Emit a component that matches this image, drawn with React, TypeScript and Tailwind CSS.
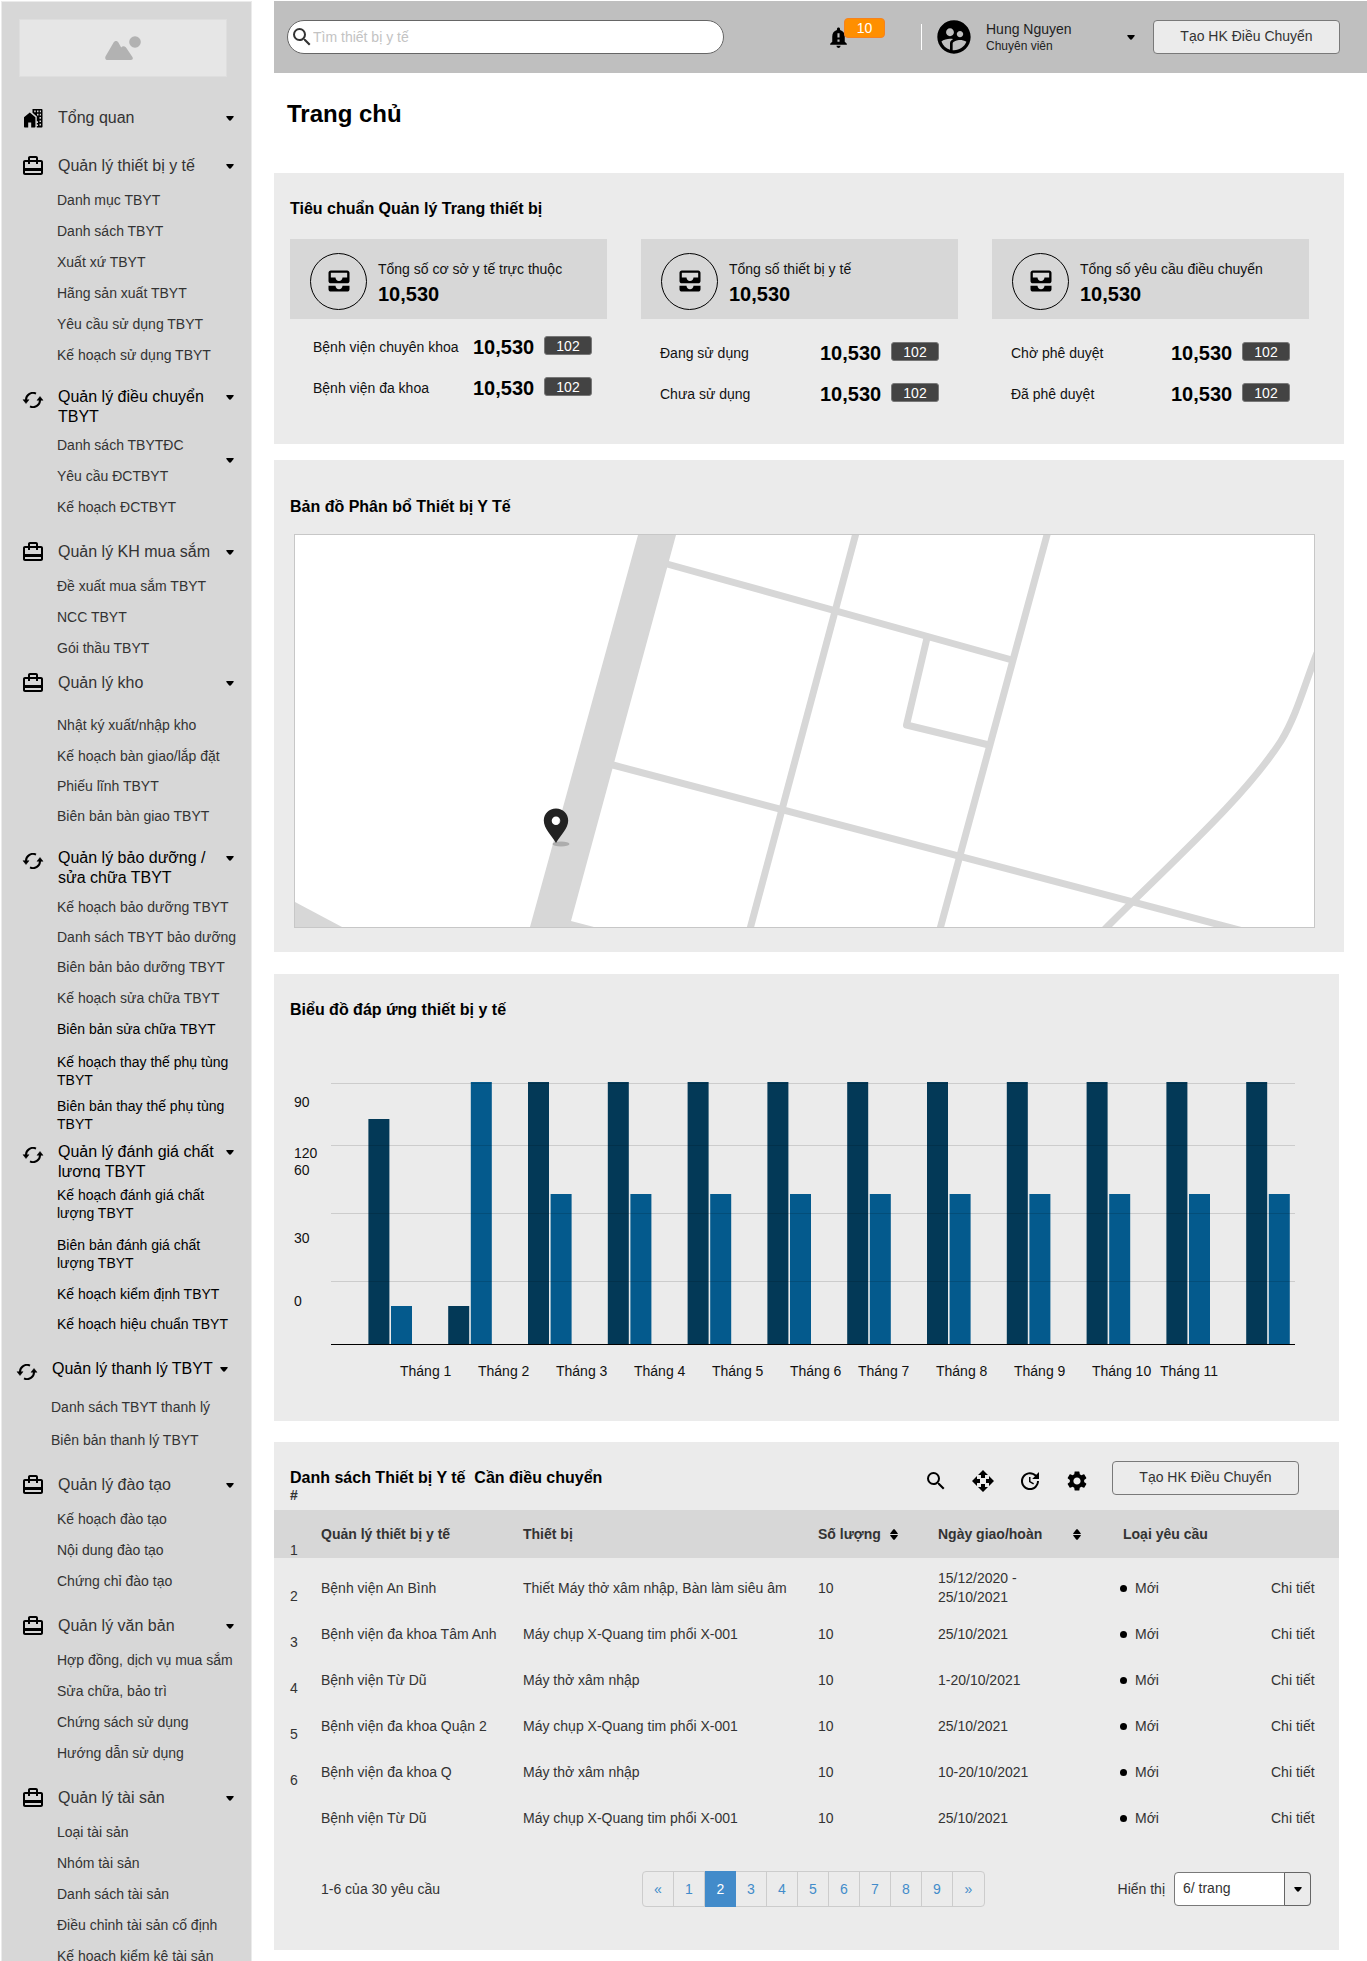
import {
  MdAllInbox,
  MdCardTravel,
  MdNotificationImportant,
  MdOpenWith,
  MdSearch,
  MdSettings,
  MdSupervisedUserCircle,
  MdUpdate,
} from "react-icons/md";

type IconKind = "home" | "case" | "cycle";

type MenuItem = { label: string; gap?: string; dark?: boolean };

type MenuGroup = {
  label: string;
  icon: IconKind;
  space: string;
  listSpace?: string;
  indent?: string;
  clip?: boolean;
  sideCaret?: boolean;
  items: MenuItem[];
};

const plain = (...labels: string[]): MenuItem[] => labels.map((label) => ({ label }));

const MENU: MenuGroup[] = [
  { label: "Tổng quan", icon: "home", space: "mt-[31px]", items: [] },
  {
    label: "Quản lý thiết bị y tế",
    icon: "case",
    space: "mt-7",
    items: plain(
      "Danh mục TBYT",
      "Danh sách TBYT",
      "Xuất xứ TBYT",
      "Hãng sản xuất TBYT",
      "Yêu cầu sử dụng TBYT",
      "Kế hoạch sử dụng TBYT",
    ),
  },
  {
    label: "Quản lý điều chuyển TBYT",
    icon: "cycle",
    space: "mt-[23px]",
    listSpace: "mt-[9px]",
    sideCaret: true,
    items: plain("Danh sách TBYTĐC", "Yêu cầu ĐCTBYT", "Kế hoạch ĐCTBYT"),
  },
  {
    label: "Quản lý KH mua sắm",
    icon: "case",
    space: "mt-[26px]",
    items: plain("Đề xuất mua sắm TBYT", "NCC TBYT", "Gói thầu TBYT"),
  },
  {
    label: "Quản lý kho",
    icon: "case",
    space: "mt-4",
    listSpace: "mt-[23px]",
    items: [
      { label: "Nhật ký xuất/nhập kho" },
      { label: "Kế hoạch bàn giao/lắp đặt" },
      { label: "Phiếu lĩnh TBYT", gap: "mt-3" },
      { label: "Biên bản bàn giao TBYT", gap: "mt-3" },
    ],
  },
  {
    label: "Quản lý bảo dưỡng / sửa chữa TBYT",
    icon: "cycle",
    space: "mt-[23px]",
    listSpace: "mt-[10px]",
    items: [
      { label: "Kế hoạch bảo dưỡng TBYT" },
      { label: "Danh sách TBYT bảo dưỡng", gap: "mt-3" },
      { label: "Biên bản bảo dưỡng TBYT", gap: "mt-3" },
      { label: "Kế hoạch sửa chữa TBYT" },
      { label: "Biên bản sửa chữa TBYT", dark: true },
      { label: "Kế hoạch thay thế phụ tùng TBYT", gap: "mt-[15px]", dark: true },
      { label: "Biên bản thay thế phụ tùng TBYT", gap: "mt-2", dark: true },
    ],
  },
  {
    label: "Quản lý đánh giá chất lượng TBYT",
    icon: "cycle",
    space: "mt-[9px]",
    listSpace: "mt-2",
    clip: true,
    items: [
      { label: "Kế hoạch đánh giá chất lượng TBYT", dark: true },
      { label: "Biên bản đánh giá chất lượng TBYT", dark: true, gap: "mt-[14px]" },
      { label: "Kế hoạch kiểm định TBYT", dark: true },
      { label: "Kế hoạch hiệu chuẩn TBYT", gap: "mt-3", dark: true },
    ],
  },
  {
    label: "Quản lý thanh lý TBYT",
    icon: "cycle",
    space: "mt-[26px]",
    listSpace: "mt-[19px]",
    indent: "pl-[13px]",
    items: [{ label: "Danh sách TBYT thanh lý" }, { label: "Biên bản thanh lý TBYT", gap: "mt-[15px]" }],
  },
  {
    label: "Quản lý đào tạo",
    icon: "case",
    space: "mt-[26px]",
    items: plain("Kế hoạch đào tạo", "Nội dung đào tạo", "Chứng chỉ đào tạo"),
  },
  {
    label: "Quản lý văn bản",
    icon: "case",
    space: "mt-[26px]",
    items: plain("Hợp đồng, dịch vụ mua sắm", "Sửa chữa, bảo trì", "Chứng sách sử dụng", "Hướng dẫn sử dụng"),
  },
  {
    label: "Quản lý tài sản",
    icon: "case",
    space: "mt-[26px]",
    items: plain(
      "Loại tài sản",
      "Nhóm tài sản",
      "Danh sách tài sản",
      "Điều chỉnh tài sản cố định",
      "Kế hoạch kiểm kê tài sản",
    ),
  },
];

function Caret() {
  return (
    <svg className="h-[5px] w-2 shrink-0" viewBox="0 0 8 5" aria-hidden="true">
      <path d="M.9 0h6.200c.6 0 .8.7.5 1.100L5.200 4.100c-.6.800-1.800.8-2.400 0L.4 1.100C.1.700.3 0 .9 0z" />
    </svg>
  );
}

function HomeIcon() {
  return (
    <svg className="mx-0.5 mt-px h-[19px] w-5 shrink-0" viewBox="0 0 20 19" aria-hidden="true">
      <path d="M6.800 3.600 1 8.200v9.500c0 .5.300.8.800.8h3.400v-5h3v5h3.400c.5 0 .8-.3.800-.8V8.200z" />
      <path
        fillRule="evenodd"
        d="M9.500 0h9c.6 0 1 .4 1 1v16.500c0 .6-.4 1-1 1h-4.700v-1.500H15v-1.600h-1.200v-1.500H15v-1.600h-1.200V7.400L9.500 3.800zM11.200 1.500v1.700h1.500V1.500zM14 1.500v1.700h1.500V1.500zM16.800 1.500v1.700H18V1.500zM14 4.800v1.700h1.500V4.800zM16.800 4.800v1.700H18V4.800zM16.500 8.100v1.700H18V8.100zM16.500 11.400v1.700H18v-1.700zM16.500 14.700v1.700H18v-1.700z"
      />
    </svg>
  );
}

function CycleIcon() {
  return (
    <svg className="mx-px mt-[5px] -mb-1 h-4 w-[22px] shrink-0" viewBox="0 0 22 16" aria-hidden="true">
      <g fill="none" stroke="#000" strokeWidth="2">
        <path d="M14 1.600A7 7 0 0 0 4 8.200" />
        <path d="M8 14.400A7 7 0 0 0 18 7.800" />
      </g>
      <path d="M1 7.700h6L4 11.500zM15 8.300h6L18 4.500z" stroke="#000" strokeWidth=".5" strokeLinejoin="round" />
    </svg>
  );
}

function GroupIcon({ kind }: { kind: IconKind }) {
  if (kind === "home") return <HomeIcon />;
  if (kind === "case") return <MdCardTravel className="-my-0.5 size-6 shrink-0" aria-hidden="true" />;
  return <CycleIcon />;
}

function SidebarGroup({ group }: { group: MenuGroup }) {
  const tone = group.icon === "cycle" ? "text-black" : "text-[#333]";
  return (
    <section className={`${group.space} ${group.indent ?? "pl-[19px]"}`}>
      <button type="button" className="flex w-full items-start text-left">
        <GroupIcon kind={group.icon} />
        <span
          className={`ml-[13px] w-[168px] text-base leading-5 ${tone} ${group.clip ? "h-9 overflow-hidden" : ""}`}
        >
          {group.label}
        </span>
        <span className="flex h-5 items-center">
          <Caret />
        </span>
      </button>
      {group.items.length > 0 && (
        <div className={`flex pl-9 ${group.listSpace ?? "mt-[15px]"}`}>
          <ul className="w-[182px] text-sm leading-[18px]">
            {group.items.map((item, i) => (
              <li key={item.label} className={i === 0 ? "" : (item.gap ?? "mt-[13px]")}>
                <a href="#" className={item.dark ? "text-black" : "text-[#333]"}>
                  {item.label}
                </a>
              </li>
            ))}
          </ul>
          {group.sideCaret && (
            <button type="button" aria-label="Mở rộng" className="-ml-[13px] flex h-[49px] items-center">
              <Caret />
            </button>
          )}
        </div>
      )}
    </section>
  );
}

function Sidebar() {
  return (
    <nav
      aria-label="Danh mục"
      className="mt-px ml-px w-[251px] shrink-0 overflow-hidden border-x border-t border-[#ebebeb] bg-[#d7d7d7]"
    >
      <div className="mt-[17px] ml-[17px] flex h-[58px] w-[208px] items-center justify-center border border-[#dedede] bg-[#e6e6e6]">
        <svg className="h-6 w-9" viewBox="0 0 36 24" fill="#b2b2b2" aria-hidden="true">
          <circle cx="30" cy="6" r="5.800" />
          <path d="M.6 20.200 8.600 6.600c1.200-2 3.600-2 4.800 0l2.800 4.800c1.200-1.600 3.600-1.500 5 .4l6.200 9.200c1 1.600.2 3-1.400 3H2.600C.6 24-.4 22 .6 20.200z" />
        </svg>
      </div>
      {MENU.map((group) => (
        <SidebarGroup key={group.label} group={group} />
      ))}
    </nav>
  );
}

function TopBar() {
  return (
    <header className="flex h-[72px] items-center bg-[#bfbfbf] pr-[27px] pl-[13px]">
      <label className="flex h-[34px] w-[437px] items-center rounded-full border border-[#666] bg-white pl-0.5">
        <MdSearch className="size-6 shrink-0 text-[#333]" aria-hidden="true" />
        <input
          type="search"
          aria-label="Tìm thiết bị y tế"
          placeholder="Tìm thiết bị y tế"
          className="mr-4 -ml-px min-w-0 flex-1 bg-transparent text-sm outline-none placeholder:text-[#c3c3c3]"
        />
      </label>
      <div className="ml-auto flex items-center">
        <button type="button" aria-label="Thông báo" className="relative">
          <MdNotificationImportant className="size-[25px]" aria-hidden="true" />
          <span className="absolute -top-[7px] left-[18px] flex h-5 w-[41px] items-center justify-center rounded border border-[#f58220] bg-[#ff8f00] text-sm leading-4 text-white">
            10
          </span>
        </button>
        <div className="ml-[70px] h-[26px] w-px bg-white" />
        <MdSupervisedUserCircle className="ml-3 size-10" aria-hidden="true" />
        <div className="ml-3 w-[130px] text-[#222]">
          <p className="text-sm leading-[17px]">Hung Nguyen</p>
          <p className="text-xs leading-4">Chuyên viên</p>
        </div>
        <button type="button" aria-label="Tài khoản" className="ml-[11px]">
          <Caret />
        </button>
        <button
          type="button"
          className="ml-[18px] h-[34px] w-[187px] rounded border border-[#797979] bg-[#ebebeb] pb-0.5 text-sm text-[#333]"
        >
          Tạo HK Điều Chuyển
        </button>
      </div>
    </header>
  );
}

type Stat = { title: string; layout: string; rows: string[] };

const STATS: Stat[] = [
  {
    title: "Tổng số cơ sở y tế trực thuộc",
    layout: "mt-[17px] pl-[23px]",
    rows: ["Bệnh viện chuyên khoa", "Bệnh viện đa khoa"],
  },
  { title: "Tổng số thiết bị y tế", layout: "mt-[23px] pl-[19px]", rows: ["Đang sử dụng", "Chưa sử dụng"] },
  {
    title: "Tổng số yêu cầu điều chuyển",
    layout: "mt-[23px] pl-[19px]",
    rows: ["Chờ phê duyệt", "Đã phê duyệt"],
  },
];

function StatsPanel() {
  return (
    <section className="mt-[45px] mr-[23px] bg-[#ebebeb] pt-[26px] pr-[35px] pb-[39px] pl-4">
      <h2 className="text-base leading-5 font-bold">Tiêu chuẩn Quản lý Trang thiết bị</h2>
      <div className="mt-5 grid grid-cols-3 gap-x-[34px]">
        {STATS.map((stat) => (
          <article key={stat.title}>
            <div className="flex h-20 items-center bg-[#d7d7d7] pt-1 pl-5">
              <div className="flex size-[57px] shrink-0 items-center justify-center rounded-full border border-black">
                <MdAllInbox className="size-7" aria-hidden="true" />
              </div>
              <div className="mt-[3px] ml-[11px]">
                <p className="text-sm leading-5 text-[#111]">{stat.title}</p>
                <p className="mt-[3px] text-xl leading-6 font-bold">10,530</p>
              </div>
            </div>
            <ul className={`flex flex-col gap-[19px] ${stat.layout}`}>
              {stat.rows.map((row) => (
                <li key={row} className="flex h-[22px] items-center">
                  <span className="w-40 text-sm text-[#111]">{row}</span>
                  <span className="w-[71px] text-xl leading-5 font-bold">10,530</span>
                  <span className="flex h-[19px] w-12 items-center justify-center self-start rounded-[3px] border border-[#777] bg-[#434343] text-sm leading-4 text-white">
                    102
                  </span>
                </li>
              ))}
            </ul>
          </article>
        ))}
      </div>
    </section>
  );
}

function MapPanel() {
  return (
    <section className="mt-4 mr-[23px] bg-[#ebebeb] pt-[37px] pb-6">
      <h2 className="pl-4 text-base leading-5 font-bold">Bản đồ Phân bổ Thiết bị Y Tế</h2>
      <div className="mt-[17px] mr-[29px] ml-5 border border-[#c7c7c7] bg-white">
        <svg className="block w-full" viewBox="0 0 1019 392" role="img" aria-label="Bản đồ">
          <g fill="#d7d7d7">
            <path d="M343 0h38L276 386l23 6H235z" />
            <path d="M0 367l47 25H0z" />
          </g>
          <g fill="none" stroke="#d7d7d7" strokeWidth="7">
            <path d="M372 29 717 125" />
            <path d="M561-2 455 394" />
            <path d="M752.500-2 645 394" />
            <path strokeLinejoin="round" d="M632 103 611.500 190 694 210" />
            <path d="M316 229.500 948 396" />
            <path d="M1022 118C1010 148 1002 180 986 206 950 262 880 324 808 396" />
          </g>
          <ellipse cx="266" cy="309" rx="8.500" ry="2.500" fill="#adadad" />
          <path
            fill="#222"
            fillRule="evenodd"
            d="M261 273.500c-7 0-12.200 5.400-12.200 12 0 8.300 8 15 12.200 22.500 4.200-7.500 12.200-14.200 12.200-22.500 0-6.600-5.200-12-12.200-12zm0 8a4.300 4.300 0 1 1 0 8.600 4.300 4.300 0 0 1 0-8.600z"
          />
        </svg>
      </div>
    </section>
  );
}

const BASELINE = 274;
const BAR_TOPS: [number, number][] = [
  [49, 236],
  [236, 12],
  ...Array.from({ length: 10 }, (): [number, number] => [12, 124]),
];
const GRID_LINES = [13, 75, 143, 211];
const SCALE_LABELS: [string, number][] = [
  ["90", 37],
  ["120", 88],
  ["60", 105],
  ["30", 173],
  ["0", 236],
];
const MONTH_X = [110, 188, 266, 344, 422, 500, 568, 646, 724, 802, 870];

function ChartPanel() {
  return (
    <section className="mt-[22px] mr-7 bg-[#ebebeb] pt-[26px] pr-[39px] pb-9 pl-4">
      <h2 className="text-base leading-5 font-bold">Biểu đồ đáp ứng thiết bị y tế</h2>
      <svg
        className="mt-[50px] block w-full text-sm"
        viewBox="0 0 1010 315"
        role="img"
        aria-label="Biểu đồ đáp ứng thiết bị y tế"
      >
        {BAR_TOPS.map(([dark, light], i) => {
          const x = 78.4 + i * 79.8;
          return (
            <g key={i}>
              <rect x={x} y={dark} width="21" height={BASELINE - dark} fill="#033957" />
              <rect x={x + 22.6} y={light} width="21" height={BASELINE - light} fill="#045a8d" />
            </g>
          );
        })}
        {GRID_LINES.map((y) => (
          <rect key={y} x="41" y={y} width="964" height="1" fill="#000" fillOpacity="0.13" />
        ))}
        <rect x="41" y={BASELINE} width="964" height="1" />
        <g fill="#111">
          {SCALE_LABELS.map(([label, y]) => (
            <text key={label} x="4" y={y}>
              {label}
            </text>
          ))}
          {MONTH_X.map((x, i) => (
            <text key={x} x={x} y="306">
              Tháng {i + 1}
            </text>
          ))}
        </g>
      </svg>
    </section>
  );
}

const ROWS = [
  ["Bệnh viện An Bình", "Thiết Máy thở xâm nhập, Bàn làm siêu âm", "15/12/2020 - 25/10/2021"],
  ["Bệnh viện đa khoa Tâm Anh", "Máy chụp X-Quang tim phổi X-001", "25/10/2021"],
  ["Bệnh viện Từ Dũ", "Máy thở xâm nhập", "1-20/10/2021"],
  ["Bệnh viện đa khoa Quận 2", "Máy chụp X-Quang tim phổi X-001", "25/10/2021"],
  ["Bệnh viện đa khoa Q", "Máy thở xâm nhập", "10-20/10/2021"],
  ["Bệnh viện Từ Dũ", "Máy chụp X-Quang tim phổi X-001", "25/10/2021"],
];

const PAGES = ["«", "1", "2", "3", "4", "5", "6", "7", "8", "9", "»"];

const TOOLS = [
  { label: "Tìm kiếm", Icon: MdSearch },
  { label: "Di chuyển", Icon: MdOpenWith },
  { label: "Cập nhật", Icon: MdUpdate },
  { label: "Cài đặt", Icon: MdSettings },
];

function SortIcon() {
  return (
    <svg className="h-[11px] w-2" viewBox="0 0 8 11" aria-hidden="true">
      <path d="M3.200.6c.4-.6 1.200-.6 1.600 0l2.900 3.600c.3.400.1.900-.4.900H.7c-.5 0-.7-.5-.4-.9zM.7 5.900h6.600c.5 0 .7.5.4.9l-2.900 3.600c-.4.6-1.200.6-1.600 0L.3 6.800c-.3-.4-.1-.9.4-.9z" />
    </svg>
  );
}

function TablePanel() {
  return (
    <section className="mt-[21px] mr-7 bg-[#ebebeb] pt-[19px] pb-[43px] text-sm text-[#333]">
      <div className="flex h-[49px] items-start pr-10 pl-4">
        <h2 className="mt-[7px] text-base leading-5 font-bold whitespace-pre text-black">
          {"Danh sách Thiết bị Y tế  Cần điều chuyển"}
        </h2>
        <div className="ml-auto flex items-start gap-[23px] text-black">
          {TOOLS.map(({ label, Icon }) => (
            <button key={label} type="button" aria-label={label} className="mt-2">
              <Icon className="size-6" aria-hidden="true" />
            </button>
          ))}
          <button
            type="button"
            className="h-[34px] w-[187px] rounded border border-[#797979] pb-0.5 text-[#333]"
          >
            Tạo HK Điều Chuyển
          </button>
        </div>
      </div>
      <table className="w-full table-fixed text-left">
        <colgroup>
          <col className="w-[47px]" />
          <col className="w-[202px]" />
          <col />
          <col className="w-[120px]" />
          <col className="w-[182px]" />
          <col className="w-[151px]" />
          <col className="w-[68px]" />
        </colgroup>
        <thead className="bg-[#d7d7d7]">
          <tr className="h-12">
            <th className="pl-4 align-top">
              <span className="-mt-6 block leading-[18px]">#</span>
            </th>
            <th>Quản lý thiết bị y tế</th>
            <th>Thiết bị</th>
            <th>
              <span className="flex items-center gap-[9px]">
                Số lượng <SortIcon />
              </span>
            </th>
            <th>
              <span className="flex items-center gap-[31px]">
                Ngày giao/hoàn <SortIcon />
              </span>
            </th>
            <th className="pl-[3px]">Loại yêu cầu</th>
            <th aria-label="Thao tác" />
          </tr>
        </thead>
        <tbody className="before:block before:h-[7px] before:content-['']">
          {ROWS.map(([place, device, date], i) => (
            <tr key={i} className="h-[46px]">
              <td className="pl-4 align-top">
                <span className="-mt-6 block leading-[18px]">{i + 1}</span>
              </td>
              <td>{place}</td>
              <td>{device}</td>
              <td>10</td>
              <td>
                <span className="block w-[100px] leading-[19px]">{date}</span>
              </td>
              <td>
                <span className="flex items-center gap-2">
                  <span className="size-[7px] rounded-full bg-black" />
                  Mới
                </span>
              </td>
              <td>
                <a href="#">Chi tiết</a>
              </td>
            </tr>
          ))}
        </tbody>
      </table>
      <div className="mt-[30px] flex items-center pr-7 pl-[47px]">
        <p className="w-[321px]">1-6 của 30 yêu cầu</p>
        <div className="flex h-9 rounded border border-[#ccc] text-[#428bca]">
          {PAGES.map((page) => (
            <button
              key={page}
              type="button"
              className={
                page === "2"
                  ? "-my-px w-[31px] bg-[#428bca] text-white"
                  : "w-[31px] border-r border-[#ccc] last:border-r-0"
              }
            >
              {page}
            </button>
          ))}
        </div>
        <label className="ml-auto flex items-center gap-[9px]">
          Hiển thị
          <span className="relative flex h-[34px] w-[137px]">
            <select className="w-full appearance-none rounded border border-[#797979] bg-white px-2 pb-0.5">
              <option>6/ trang</option>
            </select>
            <span className="pointer-events-none absolute inset-y-0 right-0 flex w-[27px] items-center justify-center rounded-r border border-[#666] bg-[#ebebeb] text-[#333]">
              <Caret />
            </span>
          </span>
        </label>
      </div>
    </section>
  );
}

export default function App() {
  return (
    <div className="flex h-screen overflow-hidden bg-white font-['Liberation_Sans',Arial,sans-serif] text-black">
      <Sidebar />
      <main className="mt-px ml-[22px] min-w-0 flex-1">
        <TopBar />
        <h1 className="mt-[27px] ml-[13px] text-2xl leading-7 font-bold">Trang chủ</h1>
        <StatsPanel />
        <MapPanel />
        <ChartPanel />
        <TablePanel />
      </main>
    </div>
  );
}
